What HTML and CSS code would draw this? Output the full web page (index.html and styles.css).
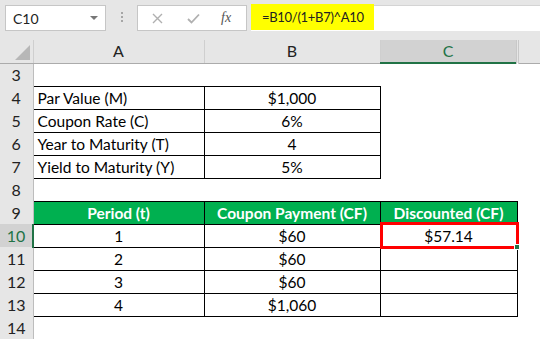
FILE: index.html
```html
<!DOCTYPE html>
<html lang="en">
<head>
    <meta charset="UTF-8">
    <title>Bond Discounted Cash Flow</title>
    <link rel="stylesheet" href="styles.css">
</head>
<body>
    <div class="toolbar">
        <div class="namebox">
            <span>C10</span>
            <span class="drop"></span>
        </div>
        <div class="dots"><i></i><i></i><i></i></div>
        <div class="fxbox">
            <svg class="btn cancel" width="11" height="11" viewBox="0 0 11 11">
                <path d="M1 1 L10 10 M10 1 L1 10" stroke="#b0b0b0" stroke-width="1.4" fill="none"/>
            </svg>
            <svg class="btn enter" width="13" height="11" viewBox="0 0 13 11">
                <path d="M1 6 L4.5 9.5 L12 1.5" stroke="#b0b0b0" stroke-width="1.8" fill="none"/>
            </svg>
            <span class="fx">fx</span>
        </div>
        <div class="formula">
            <span class="hilite">=B10/(1+B7)^A10</span>
        </div>
    </div>

    <table class="sheet">
        <colgroup>
            <col class="c-row">
            <col class="c-a">
            <col class="c-b">
            <col class="c-c">
            <col>
        </colgroup>
        <tr class="colhead">
            <th class="corner"><span class="tri"></span></th>
            <th>A</th>
            <th>B</th>
            <th class="sel">C</th>
            <th class="last"></th>
        </tr>
        <tr>
            <th class="rh">3</th><td></td><td></td><td></td><td></td>
        </tr>
        <tr>
            <th class="rh">4</th><td class="bx left">Par Value (M)</td><td class="bx">$1,000</td><td></td><td></td>
        </tr>
        <tr>
            <th class="rh">5</th><td class="bx left">Coupon Rate (C)</td><td class="bx">6%</td><td></td><td></td>
        </tr>
        <tr>
            <th class="rh">6</th><td class="bx left">Year to Maturity (T)</td><td class="bx">4</td><td></td><td></td>
        </tr>
        <tr>
            <th class="rh">7</th><td class="bx left">Yield to Maturity (Y)</td><td class="bx">5%</td><td></td><td></td>
        </tr>
        <tr>
            <th class="rh">8</th><td></td><td></td><td></td><td></td>
        </tr>
        <tr>
            <th class="rh">9</th><td class="bx hd">Period (t)</td><td class="bx hd">Coupon Payment (CF)</td><td class="bx hd">Discounted (CF)</td><td></td>
        </tr>
        <tr>
            <th class="rh sel">10</th><td class="bx">1</td><td class="bx">$60</td><td class="bx active">$57.14<span class="ring"></span><span class="handle"></span></td><td></td>
        </tr>
        <tr>
            <th class="rh">11</th><td class="bx">2</td><td class="bx">$60</td><td class="bx"></td><td></td>
        </tr>
        <tr>
            <th class="rh">12</th><td class="bx">3</td><td class="bx">$60</td><td class="bx"></td><td></td>
        </tr>
        <tr>
            <th class="rh">13</th><td class="bx">4</td><td class="bx">$1,060</td><td class="bx"></td><td></td>
        </tr>
        <tr>
            <th class="rh">14</th><td></td><td></td><td></td><td></td>
        </tr>
    </table>
</body>
</html>
```

FILE: styles.css
```css
body {
    margin: 0;
    font-family: "Lato", "Open Sans", sans-serif;
    font-size: 15.5px;
    color: #000;
    background-color: #fff;
    overflow: hidden;
}

/* formula toolbar */
.toolbar {
    display: flex;
    align-items: flex-start;
    height: 40px;
    padding-top: 5px;
    box-sizing: border-box;
    background-color: #e6e6e6;
}
.namebox {
    display: flex;
    align-items: center;
    justify-content: space-between;
    box-sizing: border-box;
    width: 101px;
    height: 26px;
    margin-left: 5px;
    padding: 0 7px 0 7px;
    background-color: #fff;
    border: 1px solid #c6c6c6;
    color: #222;
    font-size: 14px;
}
.drop {
    width: 0;
    height: 0;
    border-left: 4px solid transparent;
    border-right: 4px solid transparent;
    border-top: 4px solid #777;
}
.dots {
    display: flex;
    flex-direction: column;
    gap: 2px;
    width: 31px;
    padding-top: 7px;
    align-items: center;
}
.dots i {
    display: block;
    width: 2px;
    height: 2px;
    background-color: #a6a6a6;
}
.fxbox {
    display: flex;
    align-items: center;
    box-sizing: border-box;
    width: 110px;
    height: 26px;
    background-color: #fff;
    border: 1px solid #c6c6c6;
}
.cancel {
    margin-left: 14px;
}
.enter {
    margin-left: 24px;
}
.fx {
    margin-left: 21px;
    color: #555;
    font-family: "Liberation Serif", serif;
    font-style: italic;
    font-size: 14px;
}
.formula {
    flex: 1;
    height: 26px;
    margin-left: 4px;
    background-color: #fff;
    border-top: 1px solid #d4d4d4;
    box-sizing: border-box;
}
.hilite {
    display: inline-block;
    height: 26px;
    line-height: 26px;
    margin-top: -2px;
    padding: 0 10px 0 11px;
    background-color: #ffff00;
    color: #222;
    font-size: 13px;
    letter-spacing: -0.3px;
}

/* sheet */
.sheet {
    border-collapse: collapse;
    table-layout: fixed;
    width: 540px;
}
.c-row { width: 33px; }
.c-a { width: 171px; }
.c-b { width: 176px; }
.c-c { width: 137px; }
.sheet tr {
    height: 23px;
}
.sheet th,
.sheet td {
    box-sizing: border-box;
    padding: 0;
    height: 23px;
    line-height: 18px;
    font-weight: normal;
    text-align: center;
    white-space: nowrap;
    overflow: visible;
}
.colhead th {
    background-color: #e6e6e6;
    border-bottom: 1px solid #ababab;
    border-right: 1px solid #cfcfcf;
    color: #222;
    font-size: 16px;
}
.colhead th.sel {
    background-color: #d2d2d2;
    color: #217346;
    border-bottom: 2px solid #217346;
}
.colhead th.last {
    border-left: 3px double #c8c8c8;
    border-right: none;
}
.corner {
    position: relative;
}
.tri {
    position: absolute;
    right: 3px;
    bottom: 3px;
    width: 0;
    height: 0;
    border-left: 15px solid transparent;
    border-bottom: 15px solid #b7b7b7;
}
.rh {
    background-color: #e6e6e6;
    border-right: 1px solid #bdbdbd;
    color: #222;
    font-size: 16px;
}
.rh.sel {
    background-color: #d2d2d2;
    color: #217346;
    border-right: 2px solid #217346;
}
.bx {
    border: 1px solid #000;
}
.left {
    text-align: left !important;
    padding-left: 4px !important;
}
.hd {
    background-color: #00b050;
    color: #fff;
    font-weight: bold !important;
}
.active {
    position: relative;
}
.ring {
    position: absolute;
    left: -1px;
    top: -3px;
    right: -2px;
    bottom: -2px;
    border: 3px solid #ff0000;
}
.handle {
    position: absolute;
    right: -3px;
    bottom: -3px;
    width: 4px;
    height: 4px;
    background-color: #217346;
    border: 1px solid #fff;
}
```
